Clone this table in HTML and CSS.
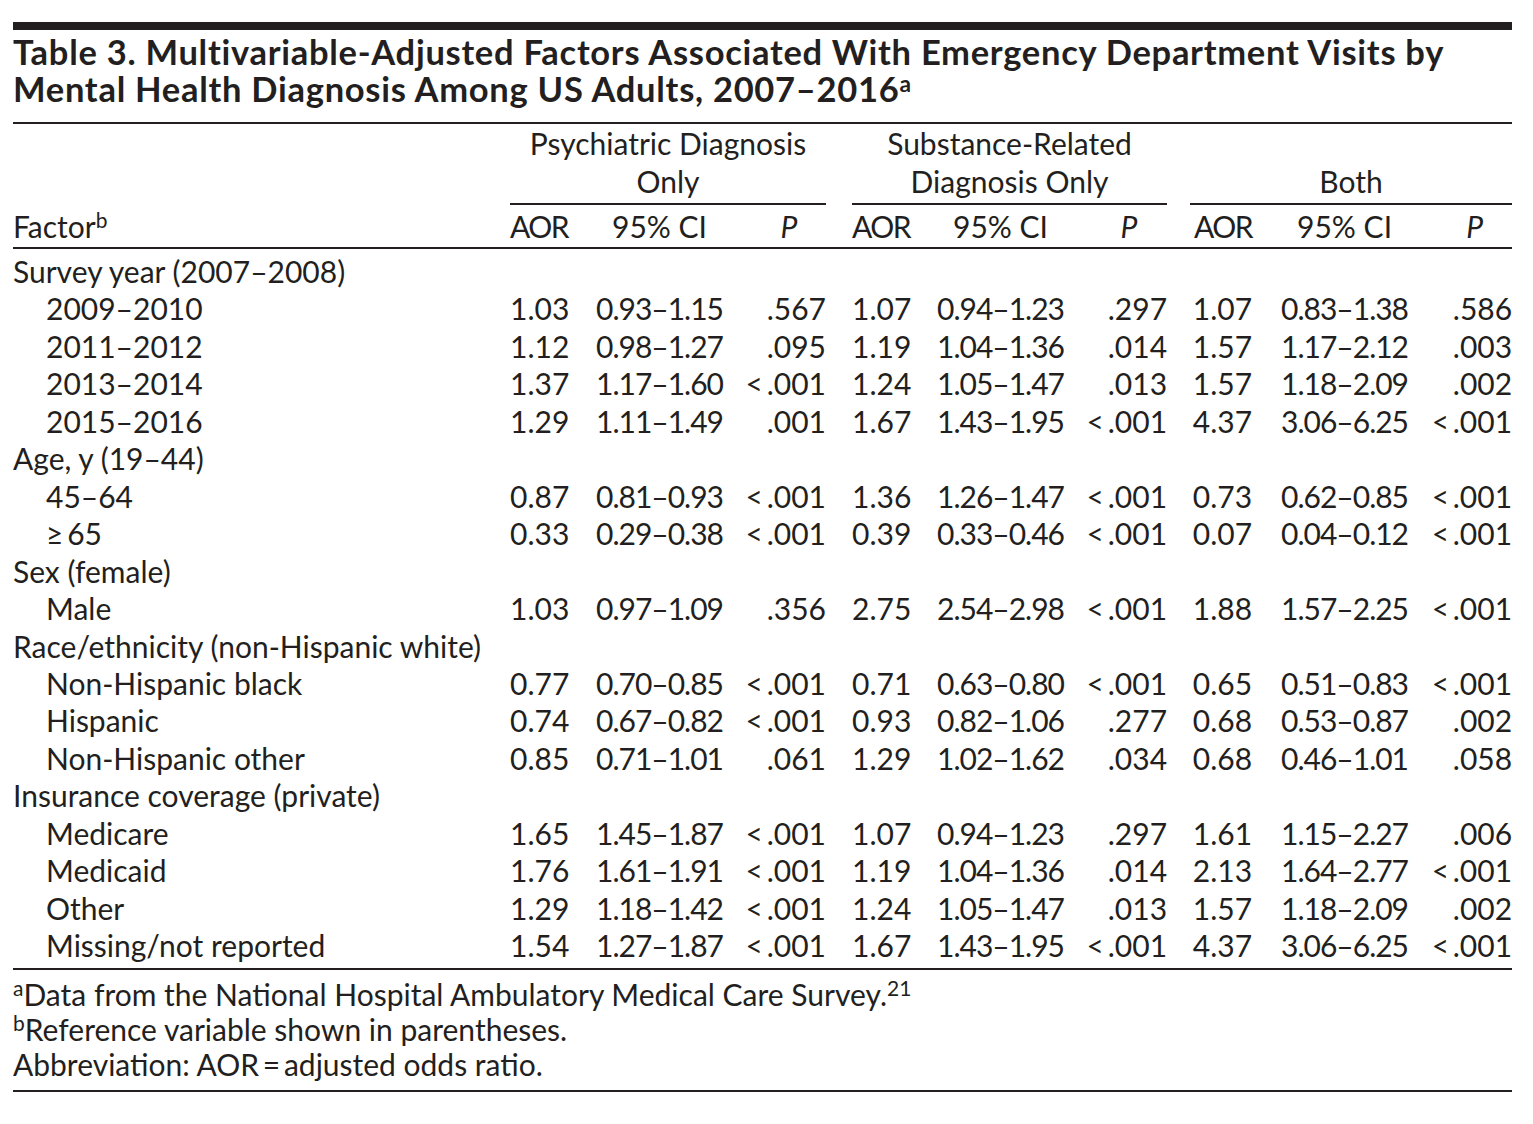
FILE: index.html
```html
<!DOCTYPE html>
<html lang="en">
<head>
<meta charset="utf-8">
<title>Table 3</title>
<link rel="stylesheet" href="styles.css">
</head>
<body>
<div class="page">
  <div class="topbar"></div>
  <h1 class="title">Table 3. Multivariable-Adjusted Factors Associated With Emergency Department Visits by<br>Mental Health Diagnosis Among US Adults, 2007–2016<sup>a</sup></h1>
  <table class="data">
    <colgroup>
      <col class="c-factor">
      <col class="c-aor1"><col class="c-ci1"><col class="c-p1">
      <col class="c-gap1">
      <col class="c-aor2"><col class="c-ci2"><col class="c-p2">
      <col class="c-gap2">
      <col class="c-aor3"><col class="c-ci3"><col class="c-p3">
    </colgroup>
    <thead>
      <tr class="grp">
        <th></th>
        <th colspan="3" class="grp-h">Psychiatric Diagnosis<br>Only</th>
        <th></th>
        <th colspan="3" class="grp-h">Substance-Related<br>Diagnosis Only</th>
        <th></th>
        <th colspan="3" class="grp-h"><br>Both</th>
      </tr>
      <tr class="sub">
        <th class="factor-h">Factor<sup>b</sup></th>
        <th class="aor-h">AOR</th><th class="ci">95% CI</th><th class="p-h"><i>P</i></th>
        <th></th>
        <th class="aor-h">AOR</th><th class="ci">95% CI</th><th class="p-h"><i>P</i></th>
        <th></th>
        <th class="aor-h">AOR</th><th class="ci">95% CI</th><th class="p-h"><i>P</i></th>
      </tr>
    </thead>
    <tbody>
      <tr class="cat first"><td colspan="12">Survey year (2007–2008)</td></tr>
      <tr><td class="ind">2009–2010</td><td class="num">1.03</td><td class="ci">0.93–1.15</td><td class="num">.567</td><td></td><td class="num">1.07</td><td class="ci">0.94–1.23</td><td class="num">.297</td><td></td><td class="num">1.07</td><td class="ci">0.83–1.38</td><td class="num">.586</td></tr>
      <tr><td class="ind">2011–2012</td><td class="num">1.12</td><td class="ci">0.98–1.27</td><td class="num">.095</td><td></td><td class="num">1.19</td><td class="ci">1.04–1.36</td><td class="num">.014</td><td></td><td class="num">1.57</td><td class="ci">1.17–2.12</td><td class="num">.003</td></tr>
      <tr><td class="ind">2013–2014</td><td class="num">1.37</td><td class="ci">1.17–1.60</td><td class="num">&lt;&thinsp;.001</td><td></td><td class="num">1.24</td><td class="ci">1.05–1.47</td><td class="num">.013</td><td></td><td class="num">1.57</td><td class="ci">1.18–2.09</td><td class="num">.002</td></tr>
      <tr><td class="ind">2015–2016</td><td class="num">1.29</td><td class="ci">1.11–1.49</td><td class="num">.001</td><td></td><td class="num">1.67</td><td class="ci">1.43–1.95</td><td class="num">&lt;&thinsp;.001</td><td></td><td class="num">4.37</td><td class="ci">3.06–6.25</td><td class="num">&lt;&thinsp;.001</td></tr>
      <tr class="cat"><td colspan="12">Age, y (19–44)</td></tr>
      <tr><td class="ind">45–64</td><td class="num">0.87</td><td class="ci">0.81–0.93</td><td class="num">&lt;&thinsp;.001</td><td></td><td class="num">1.36</td><td class="ci">1.26–1.47</td><td class="num">&lt;&thinsp;.001</td><td></td><td class="num">0.73</td><td class="ci">0.62–0.85</td><td class="num">&lt;&thinsp;.001</td></tr>
      <tr><td class="ind">≥&thinsp;65</td><td class="num">0.33</td><td class="ci">0.29–0.38</td><td class="num">&lt;&thinsp;.001</td><td></td><td class="num">0.39</td><td class="ci">0.33–0.46</td><td class="num">&lt;&thinsp;.001</td><td></td><td class="num">0.07</td><td class="ci">0.04–0.12</td><td class="num">&lt;&thinsp;.001</td></tr>
      <tr class="cat"><td colspan="12">Sex (female)</td></tr>
      <tr><td class="ind">Male</td><td class="num">1.03</td><td class="ci">0.97–1.09</td><td class="num">.356</td><td></td><td class="num">2.75</td><td class="ci">2.54–2.98</td><td class="num">&lt;&thinsp;.001</td><td></td><td class="num">1.88</td><td class="ci">1.57–2.25</td><td class="num">&lt;&thinsp;.001</td></tr>
      <tr class="cat"><td colspan="12">Race/ethnicity (non-Hispanic white)</td></tr>
      <tr><td class="ind">Non-Hispanic black</td><td class="num">0.77</td><td class="ci">0.70–0.85</td><td class="num">&lt;&thinsp;.001</td><td></td><td class="num">0.71</td><td class="ci">0.63–0.80</td><td class="num">&lt;&thinsp;.001</td><td></td><td class="num">0.65</td><td class="ci">0.51–0.83</td><td class="num">&lt;&thinsp;.001</td></tr>
      <tr><td class="ind">Hispanic</td><td class="num">0.74</td><td class="ci">0.67–0.82</td><td class="num">&lt;&thinsp;.001</td><td></td><td class="num">0.93</td><td class="ci">0.82–1.06</td><td class="num">.277</td><td></td><td class="num">0.68</td><td class="ci">0.53–0.87</td><td class="num">.002</td></tr>
      <tr><td class="ind">Non-Hispanic other</td><td class="num">0.85</td><td class="ci">0.71–1.01</td><td class="num">.061</td><td></td><td class="num">1.29</td><td class="ci">1.02–1.62</td><td class="num">.034</td><td></td><td class="num">0.68</td><td class="ci">0.46–1.01</td><td class="num">.058</td></tr>
      <tr class="cat"><td colspan="12">Insurance coverage (private)</td></tr>
      <tr><td class="ind">Medicare</td><td class="num">1.65</td><td class="ci">1.45–1.87</td><td class="num">&lt;&thinsp;.001</td><td></td><td class="num">1.07</td><td class="ci">0.94–1.23</td><td class="num">.297</td><td></td><td class="num">1.61</td><td class="ci">1.15–2.27</td><td class="num">.006</td></tr>
      <tr><td class="ind">Medicaid</td><td class="num">1.76</td><td class="ci">1.61–1.91</td><td class="num">&lt;&thinsp;.001</td><td></td><td class="num">1.19</td><td class="ci">1.04–1.36</td><td class="num">.014</td><td></td><td class="num">2.13</td><td class="ci">1.64–2.77</td><td class="num">&lt;&thinsp;.001</td></tr>
      <tr><td class="ind">Other</td><td class="num">1.29</td><td class="ci">1.18–1.42</td><td class="num">&lt;&thinsp;.001</td><td></td><td class="num">1.24</td><td class="ci">1.05–1.47</td><td class="num">.013</td><td></td><td class="num">1.57</td><td class="ci">1.18–2.09</td><td class="num">.002</td></tr>
      <tr class="last"><td class="ind">Missing/not reported</td><td class="num">1.54</td><td class="ci">1.27–1.87</td><td class="num">&lt;&thinsp;.001</td><td></td><td class="num">1.67</td><td class="ci">1.43–1.95</td><td class="num">&lt;&thinsp;.001</td><td></td><td class="num">4.37</td><td class="ci">3.06–6.25</td><td class="num">&lt;&thinsp;.001</td></tr>
    </tbody>
  </table>
  <div class="notes">
    <p><sup>a</sup>Data from the National Hospital Ambulatory Medical Care Survey.<sup>21</sup></p>
    <p><sup>b</sup>Reference variable shown in parentheses.</p>
    <p>Abbreviation: AOR&thinsp;=&thinsp;adjusted odds ratio.</p>
  </div>
</div>
</body>
</html>
```
FILE: styles.css
```css
html, body {
  margin: 0;
  padding: 0;
  background: #ffffff;
}

body {
  color: #231f20;
  font-family: "Lato", "Open Sans", sans-serif;
  font-size: 30px;
}

.page {
  width: 1499px;
  padding: 22px 0 0 13px;
}

.topbar {
  height: 8px;
  background: #231f20;
}

.title {
  margin: 3px 0 0;
  padding: 0 0 15px;
  font-size: 34.5px;
  font-weight: 700;
  letter-spacing: 0.72px;
  line-height: 37px;
  border-bottom: 2px solid #231f20;
}

sup {
  font-size: 0.7em;
  line-height: 0;
  vertical-align: 0.5em;
}

.title sup {
  font-size: 0.66em;
  letter-spacing: 0;
  vertical-align: 0.42em;
}

.data {
  width: 1499px;
  table-layout: fixed;
  border-collapse: collapse;
  border-spacing: 0;
}

.c-factor { width: 497px; }
.c-aor1 { width: 57px; }
.c-ci1 { width: 175px; }
.c-p1 { width: 84px; }
.c-gap1 { width: 26px; }
.c-aor2 { width: 58px; }
.c-ci2 { width: 171px; }
.c-p2 { width: 86px; }
.c-gap2 { width: 23px; }
.c-aor3 { width: 62px; }
.c-ci3 { width: 175px; }
.c-p3 { width: 85px; }

th, td {
  padding: 0;
  font-weight: 400;
  white-space: nowrap;
}

.grp th {
  line-height: 38px;
  padding: 0 0 3px;
}

.grp .grp-h {
  text-align: center;
  border-bottom: 2px solid #231f20;
}

.sub th {
  line-height: 38px;
  padding: 2px 0;
  border-bottom: 2px solid #231f20;
}

.sub th.ci,
.sub th.p-h {
  padding-left: 10px;
}

.factor-h {
  text-align: left;
}

.aor-h {
  text-align: right;
  letter-spacing: -1.5px;
}

.ci {
  text-align: center;
}

.p-h {
  text-align: center;
}

.p-h i {
  font-style: italic;
}

tbody td {
  line-height: 37.45px;
  text-align: left;
}

tbody td.num {
  text-align: right;
}

tbody td.ci {
  text-align: center;
  padding-left: 10px;
  letter-spacing: -1px;
}

.ind {
  padding-left: 33px;
}

tr.first td {
  padding-top: 4px;
}

tr.last td {
  padding-bottom: 3px;
  border-bottom: 2px solid #231f20;
}

.notes {
  padding: 7px 0 8px;
  border-bottom: 2px solid #231f20;
}

.notes p {
  margin: 0;
  line-height: 35px;
}
```
